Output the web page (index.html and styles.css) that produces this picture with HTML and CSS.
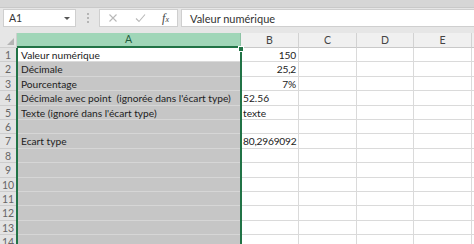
FILE: index.html
```html
<!DOCTYPE html>
<html lang="fr">
<head>
    <meta charset="UTF-8">
    <meta name="viewport" content="width=device-width, initial-scale=1.0">
    <title>Ecart type</title>
    <link rel="stylesheet" href="styles.css">
</head>
<body>
    <div class="ribbon-edge"></div>

    <div class="formula-bar">
        <div class="name-box">
            <span>A1</span>
            <span class="drop"></span>
        </div>
        <div class="grip">
            <span></span><span></span><span></span>
        </div>
        <div class="fx-buttons">
            <svg width="10" height="10" viewBox="0 0 10 10"><path d="M1.5 1.5 L8.5 8.5 M8.5 1.5 L1.5 8.5" stroke="#b8b8b8" stroke-width="1.1" fill="none"/></svg>
            <svg width="11" height="10" viewBox="0 0 11 10"><path d="M1 5.5 L4 8.5 L10 1.5" stroke="#b8b8b8" stroke-width="1.1" fill="none"/></svg>
            <span class="fx"><i>f</i><small>x</small></span>
        </div>
        <div class="formula-input">Valeur numérique</div>
    </div>

    <div class="sheet">
        <div class="corner"><span class="tri"></span></div>
        <div class="col-head active">A</div>
        <div class="col-head">B</div>
        <div class="col-head">C</div>
        <div class="col-head">D</div>
        <div class="col-head">E</div>
        <div class="col-head tail"></div>

        <div class="row-head">1</div>
        <div class="cell sel first">Valeur numérique</div>
        <div class="cell num">150</div>
        <div class="cell"></div><div class="cell"></div><div class="cell"></div><div class="cell tail"></div>

        <div class="row-head">2</div>
        <div class="cell sel">Décimale</div>
        <div class="cell num">25,2</div>
        <div class="cell"></div><div class="cell"></div><div class="cell"></div><div class="cell tail"></div>

        <div class="row-head">3</div>
        <div class="cell sel">Pourcentage</div>
        <div class="cell num">7%</div>
        <div class="cell"></div><div class="cell"></div><div class="cell"></div><div class="cell tail"></div>

        <div class="row-head">4</div>
        <div class="cell sel">Décimale avec point &nbsp;(ignorée dans l'écart type)</div>
        <div class="cell">52.56</div>
        <div class="cell"></div><div class="cell"></div><div class="cell"></div><div class="cell tail"></div>

        <div class="row-head">5</div>
        <div class="cell sel">Texte (ignoré dans l'écart type)</div>
        <div class="cell">texte</div>
        <div class="cell"></div><div class="cell"></div><div class="cell"></div><div class="cell tail"></div>

        <div class="row-head">6</div>
        <div class="cell sel"></div>
        <div class="cell"></div>
        <div class="cell"></div><div class="cell"></div><div class="cell"></div><div class="cell tail"></div>

        <div class="row-head">7</div>
        <div class="cell sel">Ecart type</div>
        <div class="cell num">80,2969092</div>
        <div class="cell"></div><div class="cell"></div><div class="cell"></div><div class="cell tail"></div>

        <div class="row-head">8</div>
        <div class="cell sel"></div><div class="cell"></div>
        <div class="cell"></div><div class="cell"></div><div class="cell"></div><div class="cell tail"></div>

        <div class="row-head">9</div>
        <div class="cell sel"></div><div class="cell"></div>
        <div class="cell"></div><div class="cell"></div><div class="cell"></div><div class="cell tail"></div>

        <div class="row-head">10</div>
        <div class="cell sel"></div><div class="cell"></div>
        <div class="cell"></div><div class="cell"></div><div class="cell"></div><div class="cell tail"></div>

        <div class="row-head">11</div>
        <div class="cell sel"></div><div class="cell"></div>
        <div class="cell"></div><div class="cell"></div><div class="cell"></div><div class="cell tail"></div>

        <div class="row-head">12</div>
        <div class="cell sel"></div><div class="cell"></div>
        <div class="cell"></div><div class="cell"></div><div class="cell"></div><div class="cell tail"></div>

        <div class="row-head">13</div>
        <div class="cell sel"></div><div class="cell"></div>
        <div class="cell"></div><div class="cell"></div><div class="cell"></div><div class="cell tail"></div>

        <div class="row-head">14</div>
        <div class="cell sel"></div><div class="cell"></div>
        <div class="cell"></div><div class="cell"></div><div class="cell"></div><div class="cell tail"></div>

        <div class="selection"><span class="handle"></span></div>
    </div>
</body>
</html>
```

FILE: styles.css
```css
body {
    margin: 0;
    width: 474px;
    height: 244px;
    overflow: hidden;
    background-color: #e6e6e6;
    font-family: Lato, "Open Sans", sans-serif;
    font-size: 10.5px;
    color: #222;
}

.ribbon-edge {
    height: 7px;
    background-color: #d6d6d6;
    border-bottom: 1px solid #c9c9c9;
}

.formula-bar {
    display: flex;
    align-items: flex-start;
    padding: 1px 0 0 3px;
    box-sizing: border-box;
    height: 25px;
}

.name-box,
.fx-buttons,
.formula-input {
    height: 18px;
    background-color: #fff;
    border: 1px solid #cfcfcf;
    box-sizing: border-box;
    display: flex;
    align-items: center;
}

.name-box {
    width: 73px;
    padding: 0 5px;
    justify-content: space-between;
    color: #333;
}

.drop {
    width: 0;
    height: 0;
    border-left: 3px solid transparent;
    border-right: 3px solid transparent;
    border-top: 3px solid #555;
}

.grip {
    width: 23px;
    height: 18px;
    display: flex;
    flex-direction: column;
    align-items: center;
    justify-content: center;
    gap: 2px;
}

.grip span {
    width: 2px;
    height: 2px;
    background-color: #b5b5b5;
}

.fx-buttons {
    width: 79px;
    padding: 0 8px 0 8px;
    justify-content: space-between;
}

.fx {
    font-family: "Liberation Serif", serif;
    font-size: 12px;
    color: #444;
}

.fx small {
    font-size: 8px;
    font-style: italic;
}

.formula-input {
    flex: 1;
    margin-left: 3px;
    padding-left: 8px;
    border-right: none;
    color: #333;
    font-size: 11px;
}

.sheet {
    display: grid;
    grid-template-columns: 17px 224px 58px 58px 57px 58px 2px;
    grid-template-rows: 15px repeat(14, 14.4px);
    background-color: #fff;
    position: relative;
}

.corner {
    background-color: #e6e6e6;
    border-right: 1px solid #cfcfcf;
    border-bottom: 1px solid #cfcfcf;
    position: relative;
}

.tri {
    position: absolute;
    right: 2px;
    bottom: 2px;
    width: 0;
    height: 0;
    border-left: 7px solid transparent;
    border-bottom: 7px solid #b4b4b4;
}

.col-head {
    background-color: #f0f0f0;
    border-right: 1px solid #d2d2d2;
    border-bottom: 1px solid #c9c9c9;
    color: #444;
    text-align: center;
    line-height: 14px;
}

.col-head.active {
    background-color: #a0d6b8;
    color: #1f5c3c;
    border-bottom: 2px solid #217346;
    border-right: 1px solid #8cc3a4;
    line-height: 13px;
}

.col-head.tail,
.cell.tail {
    border-right: none;
}

.row-head {
    background-color: #e3e3e3;
    border-right: 1px solid #c9c9c9;
    border-bottom: 1px solid #cdcdcd;
    color: #666;
    text-align: center;
    line-height: 14px;
}

.cell {
    border-right: 1px solid #dadada;
    border-bottom: 1px solid #dadada;
    padding: 0 2px;
    font-size: 10.2px;
    line-height: 14px;
    white-space: nowrap;
    overflow: visible;
}

.cell.sel {
    background-color: #c6c6c6;
    border-bottom: 1px solid #d6d6d6;
    padding-left: 4px;
}

.cell.sel.first {
    background-color: #fff;
    border-bottom-color: #dadada;
}

.cell.num {
    text-align: right;
    letter-spacing: -0.2px;
}

/* green frame drawn over column A */
.selection {
    position: absolute;
    left: 16px;
    top: 15px;
    width: 226px;
    bottom: 0;
    box-sizing: border-box;
    border-left: 2px solid #217346;
    border-right: 2px solid #217346;
}

.handle {
    position: absolute;
    right: -4px;
    top: -2px;
    width: 4px;
    height: 4px;
    background-color: #217346;
    border: 1px solid #fff;
}
```
